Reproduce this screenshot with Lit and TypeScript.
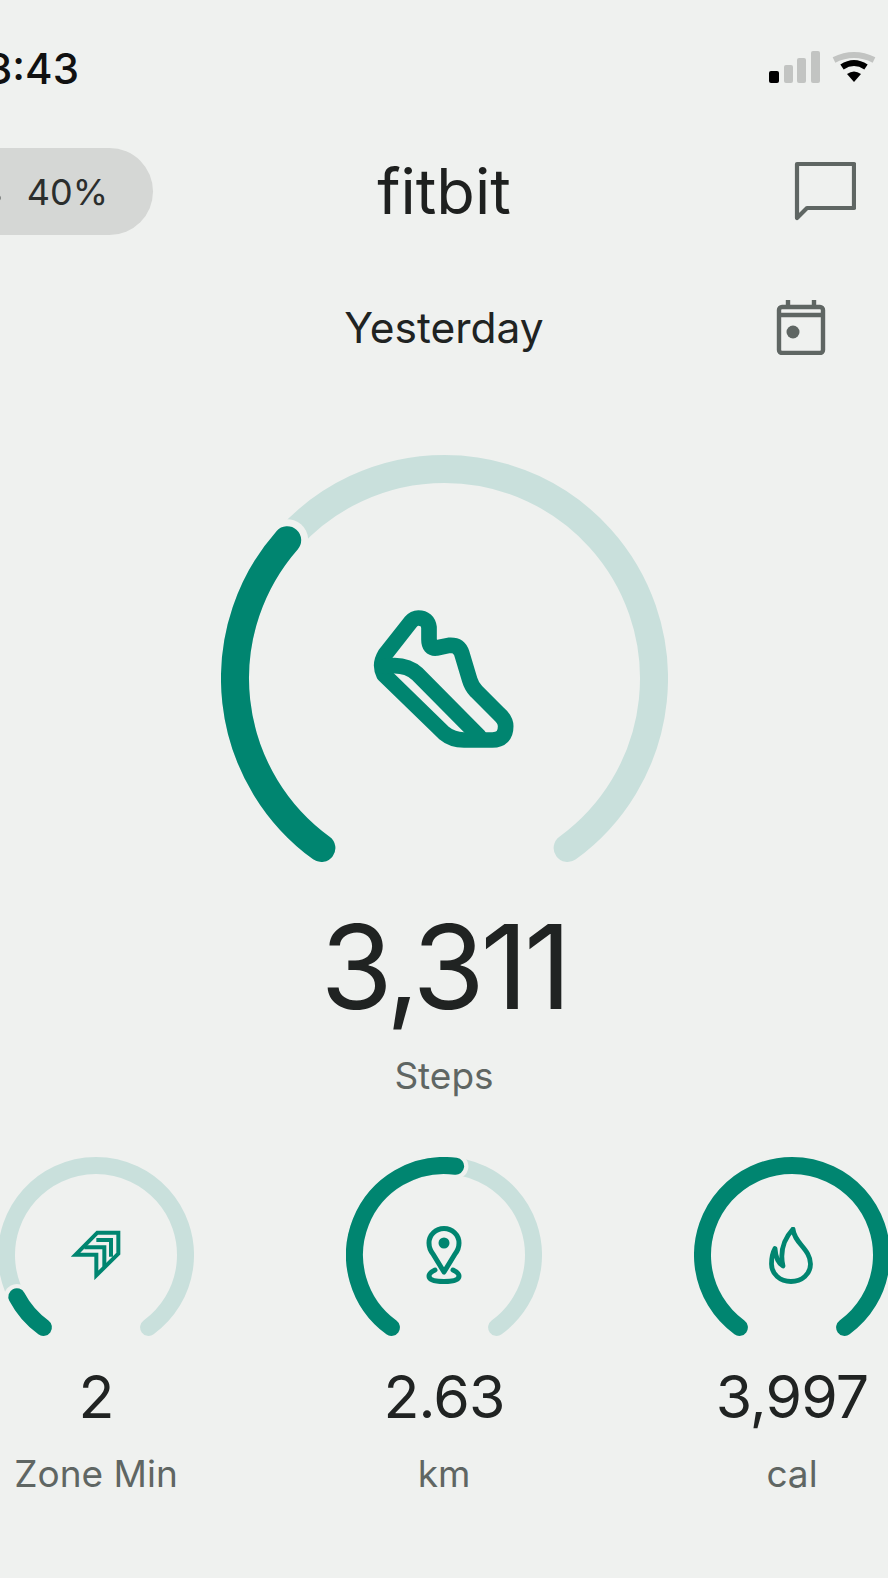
import { LitElement, css, html, svg } from "lit";
import { customElement, property } from "lit/decorators.js";

const SWEEP = 288;
const START = 216;

function polar(r: number, deg: number, c: number) {
  const a = (deg * Math.PI) / 180;
  return [c + r * Math.sin(a), c - r * Math.cos(a)];
}

function arc(r: number, c: number, from: number, to: number) {
  const [x1, y1] = polar(r, from, c);
  const [x2, y2] = polar(r, to, c);
  const large = to - from > 180 ? 1 : 0;
  return `M${x1.toFixed(2)} ${y1.toFixed(2)}A${r} ${r} 0 ${large} 1 ${x2.toFixed(2)} ${y2.toFixed(2)}`;
}

@customElement("ring-gauge")
export class RingGauge extends LitElement {
  static styles = css`
    :host {
      display: grid;
      place-items: center;
    }
    svg,
    .center {
      grid-area: 1 / 1;
    }
    .center {
      display: flex;
    }
    path {
      fill: none;
      stroke-linecap: round;
    }
    .track {
      stroke: #c9e0dc;
    }
    .fill {
      stroke: #008570;
    }
    .notch {
      stroke: #eff1ef;
    }
  `;

  @property({ type: Number }) size = 196;
  @property({ type: Number }) stroke = 17;
  @property({ type: Number }) value = 0;

  render() {
    const c = this.size / 2;
    const r = c - this.stroke / 2;
    const end = START + SWEEP * Math.min(this.value, 1);
    return html`
      <svg width=${this.size} height=${this.size} viewBox="0 0 ${this.size} ${this.size}">
        ${this.value < 1
          ? svg`
              <path class="track" stroke-width=${this.stroke} d=${arc(r, c, START, START + SWEEP)}></path>
              <path class="notch" stroke-width=${this.stroke * 1.5} d=${arc(r, c, end - 0.5, end)}></path>
            `
          : null}
        <path class="fill" stroke-width=${this.stroke} d=${arc(r, c, START, end)}></path>
      </svg>
      <div class="center"><slot></slot></div>
    `;
  }
}

const shoeIcon = html`<svg width="190" height="170" viewBox="0 8 570 510" fill="none" stroke="#008570" stroke-width="47" stroke-linejoin="round" stroke-linecap="round">
  <path d="M185 92L108 190Q90 220 105 250L285 425Q310 446 345 446L430 446Q470 446 470 405Q470 385 450 368L382 300Q368 285 362 265L338 185Q330 160 300 162L262 170Q240 172 240 145L240 108Q236 80 208 80Q195 80 185 92Z"></path>
  <path d="M110 225Q170 215 205 248L390 435"></path>
</svg>`;

const zoneIcon = html`<svg width="50" height="50" viewBox="0 0 150 150" fill="none" stroke="#008570" stroke-width="12">
  <path d="M14 74L79 8H142V71L76 136V74Z"></path>
  <path d="M40 52H100V110"></path>
  <path d="M76 30H120V80"></path>
</svg>`;

const pinIcon = html`<svg width="36" height="58" viewBox="0 0 36 58" fill="none" stroke="#008570" stroke-width="5" stroke-linejoin="round" stroke-linecap="round">
  <path d="M18 46L7 28Q3 23 3 17A15 14.500 0 0 1 33 17Q33 23 29 28Z"></path>
  <circle cx="18" cy="17" r="5.500" fill="#008570" stroke="none"></circle>
  <path d="M9 44Q3 47 3 50Q3 55.500 18 55.500Q33 55.500 33 50Q33 47 27 44"></path>
</svg>`;

const flameIcon = html`<svg width="47" height="57" viewBox="0 0 47 57" fill="none" stroke="#008570" stroke-width="4.800" stroke-linejoin="round">
  <path d="M24 2C25 16 41.500 22 41.500 37C41.500 47 33 54.500 22 54.500C11 54.500 2.500 47 2.500 37C2.500 31 3.500 26 6 21.500C6.500 29 9 36 14 39C11 26 14 13 24 2Z"></path>
</svg>`;

const chatIcon = html`<svg width="62" height="62" viewBox="0 0 62 62" fill="none" stroke="#5f6663" stroke-width="4.200" stroke-linejoin="round">
  <path d="M3 3H60V47H13L3 57Z"></path>
</svg>`;

const calendarIcon = html`<svg width="50" height="56" viewBox="0 0 50 56" fill="none" stroke="#5f6663" stroke-width="4.400" stroke-linejoin="round">
  <rect x="3" y="8" width="44" height="46" rx="3"></rect>
  <path d="M3 16H47M12 1V8M38 1V8"></path>
  <circle cx="17" cy="33" r="6.500" fill="#5f6663" stroke="none"></circle>
</svg>`;

const signalIcon = html`<svg width="51" height="32" viewBox="0 0 51 32">
  <rect x="0" y="20" width="10" height="12" rx="2" fill="#000"></rect>
  <rect x="15" y="14" width="9" height="18" rx="2" fill="#c2c4c2"></rect>
  <rect x="28" y="7" width="9" height="25" rx="2" fill="#c2c4c2"></rect>
  <rect x="42" y="0" width="9" height="32" rx="2" fill="#c2c4c2"></rect>
</svg>`;

const wifiIcon = html`<svg width="44" height="34" viewBox="0 0 44 34" fill="none" stroke-linecap="butt">
  <path d="M2 11Q22 1 42 11" stroke="#c2c4c2" stroke-width="6"></path>
  <path d="M10 18Q22 10 34 18" stroke="#000" stroke-width="6"></path>
  <path d="M15 25L22 33L29 25Q22 20 15 25Z" fill="#000"></path>
</svg>`;

const pillGlyph = html`<svg class="glyph" width="10" height="12" viewBox="0 0 10 12" fill="none" stroke="#2b2e2d" stroke-width="3">
  <circle cx="3" cy="6" r="4"></circle>
</svg>`;

interface Stat {
  value: number;
  amount: string;
  label: string;
  icon: unknown;
}

const stats: Stat[] = [
  { value: 0.091, amount: "2", label: "Zone Min", icon: zoneIcon },
  { value: 0.526, amount: "2.63", label: "km", icon: pinIcon },
  { value: 1, amount: "3,997", label: "cal", icon: flameIcon },
];

@customElement("app-root")
export class AppRoot extends LitElement {
  static styles = css`
    :host {
      display: block;
      width: 888px;
      height: 1578px;
      overflow: hidden;
      background: #eff1ef;
      color: #202322;
      font-family: Inter, Roboto, sans-serif;
    }
    .status {
      display: flex;
      justify-content: space-between;
      align-items: center;
      height: 136px;
      padding-right: 12px;
    }
    .time {
      display: flex;
      justify-content: flex-end;
      width: 79px;
      font-size: 42px;
      font-weight: 550;
      white-space: nowrap;
      color: #111;
    }
    .status-icons {
      display: flex;
      align-items: flex-end;
      gap: 12px;
      margin-top: -4px;
    }
    .header {
      display: grid;
      grid-template-columns: 1fr auto 1fr;
      align-items: center;
      height: 87px;
      margin-top: 12px;
    }
    .pill {
      display: flex;
      justify-content: flex-end;
      align-items: center;
      gap: 25px;
      width: 153px;
      height: 87px;
      padding-right: 45px;
      box-sizing: border-box;
      border-radius: 0 44px 44px 0;
      background: #d5d7d5;
      font-size: 36px;
      color: #2b2e2d;
      white-space: nowrap;
    }
    .glyph {
      flex: none;
      margin-top: 12px;
    }
    .brand {
      font-size: 63px;
      line-height: 1;
      color: #1e201f;
    }
    .chat {
      justify-self: end;
      display: flex;
      margin-right: 32px;
    }
    .date-row {
      display: grid;
      grid-template-columns: 1fr auto 1fr;
      align-items: center;
      height: 60px;
      margin-top: 62px;
    }
    .date {
      grid-column: 2;
      font-size: 42.500px;
      color: #202322;
    }
    .calendar {
      justify-self: end;
      display: flex;
      margin-right: 62px;
    }
    .main {
      display: flex;
      flex-direction: column;
      align-items: center;
      margin-top: 98px;
    }
    .steps {
      margin-top: -5px;
      font-size: 117px;
      line-height: 140px;
      letter-spacing: -0.035em;
    }
    .steps-label {
      margin-top: 17px;
      font-size: 37px;
      line-height: 44px;
      color: #5f6663;
    }
    .stats {
      display: grid;
      grid-template-columns: repeat(3, 1fr);
      margin: 59px -78px 0;
    }
    .stat {
      display: flex;
      flex-direction: column;
      align-items: center;
    }
    .amount {
      margin-top: 8px;
      font-size: 59px;
      line-height: 72px;
      letter-spacing: -0.015em;
    }
    .label {
      margin-top: 19px;
      font-size: 37px;
      line-height: 44px;
      color: #5f6663;
    }
  `;

  render() {
    return html`
      <div class="status">
        <div class="time">3:43</div>
        <div class="status-icons">${signalIcon}${wifiIcon}</div>
      </div>
      <div class="header">
        <div class="pill">${pillGlyph}<span>40%</span></div>
        <div class="brand">fitbit</div>
        <div class="chat">${chatIcon}</div>
      </div>
      <div class="date-row">
        <div class="date">Yesterday</div>
        <div class="calendar">${calendarIcon}</div>
      </div>
      <div class="main">
        <ring-gauge size="447" stroke="28" value="0.331">${shoeIcon}</ring-gauge>
        <div class="steps">3,311</div>
        <div class="steps-label">Steps</div>
      </div>
      <div class="stats">
        ${stats.map(
          (s) => html`
            <div class="stat">
              <ring-gauge size="196" stroke="17" value=${s.value}>${s.icon}</ring-gauge>
              <div class="amount">${s.amount}</div>
              <div class="label">${s.label}</div>
            </div>
          `,
        )}
      </div>
    `;
  }
}
